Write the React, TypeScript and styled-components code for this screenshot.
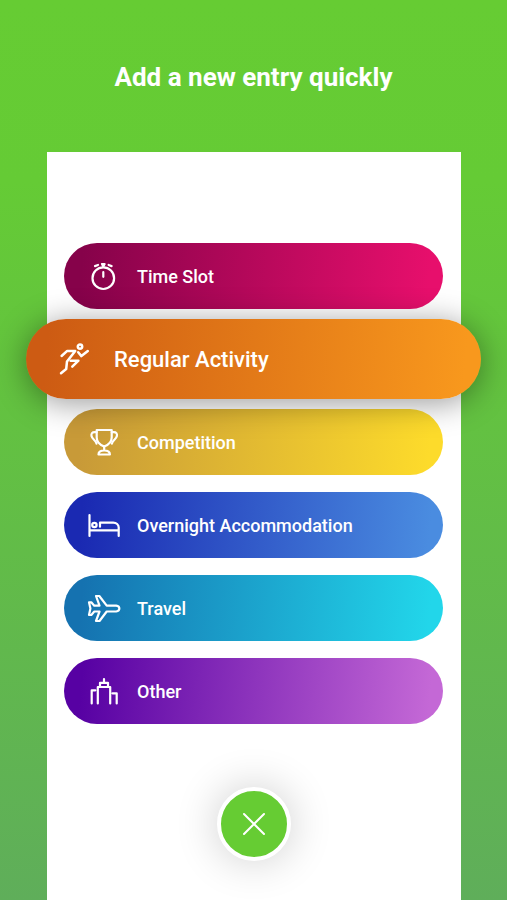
import React from 'react';
import styled, { createGlobalStyle, css } from 'styled-components';

const GlobalStyle = createGlobalStyle`
  * { box-sizing: border-box; }
  body {
    margin: 0;
    font-family: Roboto, "Liberation Sans", sans-serif;
  }
`;

const Page = styled.div`
  display: flex;
  flex-direction: column;
  min-height: 100vh;
  background: linear-gradient(180deg, #66cc33 0%, #65cb35 20%, #5fae5a 100%);
`;

const Header = styled.header`
  display: flex;
  align-items: center;
  justify-content: center;
  padding: 61px 24px 59px;
`;

const Title = styled.h1`
  margin: 0;
  color: #fff;
  font-size: 26px;
  line-height: 32px;
  font-weight: 700;
  text-align: center;
`;

const Panel = styled.main`
  display: flex;
  flex: 1;
  flex-direction: column;
  align-items: center;
  margin: 0 46px 0 47px;
  padding: 91px 18px 38px 17px;
  background: #fff;
`;

const EntryList = styled.ul`
  display: flex;
  flex-direction: column;
  align-self: stretch;
  gap: 17px;
  margin: 0;
  padding: 0;
  list-style: none;
`;

const EntryItem = styled.li<{ $featured?: boolean }>`
  display: flex;
  ${({ $featured }) =>
    $featured &&
    css`
      z-index: 1;
      margin: -7px -38px;
    `}
`;

const EntryButton = styled.button<{ $from: string; $to: string; $featured?: boolean }>`
  display: flex;
  flex: 1;
  align-items: center;
  gap: 15px;
  height: 66px;
  padding: 0 22px;
  border: 0;
  border-radius: 40px;
  color: #fff;
  background: linear-gradient(95deg, ${p => p.$from} 5%, ${p => p.$to} 96%);
  font-family: inherit;
  font-size: 18px;
  font-weight: 500;
  text-align: left;
  cursor: pointer;
  ${({ $featured }) =>
    $featured &&
    css`
      gap: 22px;
      height: 80px;
      padding: 0 30px;
      font-size: 22px;
      box-shadow: 0 4px 32px rgba(0, 0, 0, 0.4);
    `}
`;

const Icon = styled.svg`
  flex: none;
  width: 36px;
  height: 36px;
  fill: none;
  stroke: currentColor;
  stroke-width: 2.2;
  stroke-linecap: round;
  stroke-linejoin: round;
`;

const CloseButton = styled.button`
  display: flex;
  align-items: center;
  justify-content: center;
  width: 74px;
  height: 74px;
  margin-top: 63px;
  padding: 0;
  border: 4px solid #fff;
  border-radius: 50%;
  color: #fff;
  background: #66cc33;
  box-shadow: 0 0 44px rgba(0, 0, 0, 0.2);
  cursor: pointer;
`;

const CloseIcon = styled(Icon)`
  width: 24px;
  height: 24px;
  stroke-width: 2;
`;

const entries = [
  {
    label: 'Time Slot',
    from: '#86024a',
    to: '#e70f6c',
    icon: (
      <>
        <circle cx="17.3" cy="20.2" r="10.8" />
        <path d="M17.3 14.2v4.6M9 8.100l3-1.100M22.600 7l3 1.100" />
        <path d="M16 6h2.600l-1.300 2.500z" />
      </>
    ),
  },
  {
    label: 'Regular Activity',
    from: '#cd5b13',
    to: '#f8981d',
    featured: true,
    icon: (
      <g strokeWidth="2.5">
        <circle cx="24" cy="5.6" r="2.2" />
        <path d="M5.600 15 11.200 9.900h8L11 20.500l-.8 7.500-5.200 4.300" />
        <path d="M14.600 19.700h7.800L16.300 25.700M22.200 11.200l3.200 3.900 6.400-5.100" />
      </g>
    ),
  },
  {
    label: 'Competition',
    from: '#c89a38',
    to: '#fddb2b',
    icon: (
      <>
        <path d="M10.7 6h15v7.5c0 4.5-3 7.3-7.5 9-4.5-1.7-7.5-4.5-7.5-9z" />
        <path d="M10.7 8.200H8.500c-2.200 0-3.500 1.300-3 3.800.7 3.200 4.400 4.300 5 7.600M25.700 8.200h2.200c2.200 0 3.500 1.300 3 3.800-.7 3.200-4.400 4.300-5 7.600" />
        <path d="M18.200 22.500v4M12.500 30.500c0-2.800 2.500-4 5.700-4s5.700 1.200 5.700 4z" />
      </>
    ),
  },
  {
    label: 'Overnight Accommodation',
    from: '#1a29b2',
    to: '#4a8ce0',
    icon: (
      <>
        <path d="M3.500 8v21M3.500 23.300h29.200M32.700 29v-8.500c0-3-2.300-4.800-5.500-4.800H14v4" />
        <circle cx="8.400" cy="18" r="2.200" />
      </>
    ),
  },
  {
    label: 'Travel',
    from: '#1572b0',
    to: '#22d6ea',
    icon: (
      <path d="M3 12.300h2.300l3 3.400h5.200L10 6h3.300l7.400 9.700h9.500c4.200.6 4.200 5.200 0 5.800h-9.500L13.500 31H10l3.500-9.500H8.300l-3 3.500H3l1.400-6.400z" />
    ),
  },
  {
    label: 'Other',
    from: '#5701a3',
    to: '#c468d6',
    icon: (
      <>
        <path d="M5.700 30.500V17.300h3.600M11.800 30.500V14h12.400v16.500M26.500 20.300h4.200v10.200" />
        <path d="M14 14V9.800h8V14M18 9.800V6" />
      </>
    ),
  },
];

export default function App() {
  return (
    <>
      <GlobalStyle />
      <Page>
        <Header>
          <Title>Add a new entry quickly</Title>
        </Header>
        <Panel>
          <EntryList>
            {entries.map(({ label, from, to, featured, icon }) => (
              <EntryItem key={label} $featured={featured}>
                <EntryButton type="button" $from={from} $to={to} $featured={featured}>
                  <Icon viewBox="0 0 36 36" aria-hidden="true">{icon}</Icon>
                  {label}
                </EntryButton>
              </EntryItem>
            ))}
          </EntryList>
          <CloseButton type="button" aria-label="Close">
            <CloseIcon viewBox="0 0 24 24" aria-hidden="true">
              <path d="m2 2 20 20M22 2 2 22" />
            </CloseIcon>
          </CloseButton>
        </Panel>
      </Page>
    </>
  );
}
